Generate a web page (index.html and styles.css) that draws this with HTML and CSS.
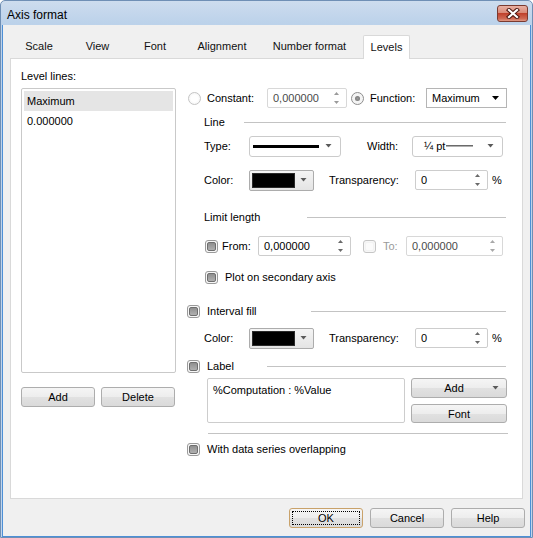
FILE: index.html
```html
<!DOCTYPE html>
<html>
<head>
<meta charset="utf-8">
<link rel="stylesheet" href="styles.css">
</head>
<body>
<div class="window">
  <div class="titlebar">
    <span class="title">Axis format</span>
    <div class="close">
      <svg width="14" height="11" viewBox="0 0 14 11"><path d="M3 2 L11 9 M11 2 L3 9" stroke="#4a1610" stroke-width="4.2" stroke-linecap="square"/><path d="M3 2 L11 9 M11 2 L3 9" stroke="#ffffff" stroke-width="2.2" stroke-linecap="square"/></svg>
    </div>
  </div>
  <div class="client">
    <div class="tabs">
      <div class="tab">Scale</div>
      <div class="tab">View</div>
      <div class="tab">Font</div>
      <div class="tab">Alignment</div>
      <div class="tab">Number format</div>
      <div class="tab active">Levels</div>
    </div>
    <div class="panel">
      <div class="left">
        <div class="lbl">Level lines:</div>
        <div class="listbox">
          <div class="item sel">Maximum</div>
          <div class="item">0.000000</div>
        </div>
        <div class="btnrow">
          <div class="btn w74">Add</div>
          <div class="btn w74">Delete</div>
        </div>
      </div>
      <div class="right">
        <div class="row r1">
          <span class="radio off"></span>
          <span class="t c-lbl">Constant:</span>
          <div class="spin dis w80"><span class="val">0,000000</span><svg class="arr" width="5" height="12" viewBox="0 0 5 12"><path d="M2.5 0 L5 3 H0Z" fill="#9a9a9a"/><path d="M0 9 H5 L2.5 12Z" fill="#9a9a9a"/></svg></div>
          <span class="radio on"></span>
          <span class="t f-lbl">Function:</span>
          <div class="combo w81"><span class="val">Maximum</span><svg width="7" height="4" viewBox="0 0 7 4"><path d="M0 0 H7 L3.5 4Z" fill="#000"/></svg></div>
        </div>

        <div class="row hdr mt7 ind17">
          <span class="t hw40">Line</span><span class="sep"></span>
        </div>

        <div class="row r20 mt7 ind17">
          <span class="t lw45">Type:</span>
          <div class="dd w92"><span class="linesample"></span><svg width="7" height="4" viewBox="0 0 7 4"><path d="M0.5 0 H6.5 L3.5 3.5Z" fill="#5a5a5a"/></svg></div>
          <span class="t lw45 ml26">Width:</span>
          <div class="dd w91 wd"><span class="val">¼ pt</span><span class="thin"></span><svg width="7" height="4" viewBox="0 0 7 4"><path d="M0.5 0 H6.5 L3.5 3.5Z" fill="#5a5a5a"/></svg></div>
        </div>

        <div class="row r20 mt14 ind17">
          <span class="t lw45">Color:</span>
          <div class="colorbox"><span class="swatch"></span><svg width="7" height="4" viewBox="0 0 7 4"><path d="M0.5 0 H6.5 L3.5 3.5Z" fill="#5a5a5a"/></svg></div>
          <span class="t tr-lbl">Transparency:</span>
          <div class="spin w73"><span class="val">0</span><svg class="arr" width="5" height="12" viewBox="0 0 5 12"><path d="M2.5 0 L5 3 H0Z" fill="#6a6a6a"/><path d="M0 9 H5 L2.5 12Z" fill="#6a6a6a"/></svg></div>
          <span class="t pct">%</span>
        </div>

        <div class="row hdr mt20 ind17">
          <span class="t hw103">Limit length</span><span class="sep"></span>
        </div>

        <div class="row r20 mt12 ind18">
          <span class="cb"></span>
          <span class="t from-lbl">From:</span>
          <div class="spin w93"><span class="val">0,000000</span><svg class="arr" width="5" height="12" viewBox="0 0 5 12"><path d="M2.5 0 L5 3 H0Z" fill="#6a6a6a"/><path d="M0 9 H5 L2.5 12Z" fill="#6a6a6a"/></svg></div>
          <span class="cb dis ml12"></span>
          <span class="t to-lbl">To:</span>
          <div class="spin dis w97"><span class="val">0,000000</span><svg class="arr" width="5" height="12" viewBox="0 0 5 12"><path d="M2.5 0 L5 3 H0Z" fill="#a8a8a8"/><path d="M0 9 H5 L2.5 12Z" fill="#a8a8a8"/></svg></div>
        </div>

        <div class="row hdr mt14 ind18">
          <span class="cb"></span><span class="t ml7">Plot on secondary axis</span>
        </div>

        <div class="row hdr mt20">
          <span class="cb"></span><span class="t ml7 hw104">Interval fill</span><span class="sep"></span>
        </div>

        <div class="row r20 mt10 ind17">
          <span class="t lw45">Color:</span>
          <div class="colorbox"><span class="swatch"></span><svg width="7" height="4" viewBox="0 0 7 4"><path d="M0.5 0 H6.5 L3.5 3.5Z" fill="#5a5a5a"/></svg></div>
          <span class="t tr-lbl">Transparency:</span>
          <div class="spin w73"><span class="val">0</span><svg class="arr" width="5" height="12" viewBox="0 0 5 12"><path d="M2.5 0 L5 3 H0Z" fill="#6a6a6a"/><path d="M0 9 H5 L2.5 12Z" fill="#6a6a6a"/></svg></div>
          <span class="t pct">%</span>
        </div>

        <div class="row hdr mt11">
          <span class="cb"></span><span class="t ml7 hw60">Label</span><span class="sep"></span>
        </div>

        <div class="labelrow">
          <div class="textarea">%Computation : %Value</div>
          <div class="labelbtns">
            <div class="btn addbtn"><span class="bt">Add</span><svg width="7" height="4" viewBox="0 0 7 4"><path d="M0.5 0 H6.5 L3.5 3.5Z" fill="#5a5a5a"/></svg></div>
            <div class="btn fontbtn">Font</div>
          </div>
        </div>

        <div class="sep2"></div>

        <div class="row hdr mt8">
          <span class="cb"></span><span class="t ml7">With data series overlapping</span>
        </div>
      </div>
    </div>
    <div class="footer">
      <div class="btn fbtn ok">OK</div>
      <div class="btn fbtn">Cancel</div>
      <div class="btn fbtn">Help</div>
    </div>
  </div>
</div>
</body>
</html>
```

FILE: styles.css
```css
html, body {
  margin: 0;
  padding: 0;
  background: #ffffff;
}
body {
  font-family: "Liberation Sans", Arial, sans-serif;
  font-size: 11px;
  color: #000;
}
.window {
  width: 533px;
  height: 538px;
  box-sizing: border-box;
  border: 1px solid #6f8fb5;
  border-radius: 5px 5px 0 0;
  background: linear-gradient(#cddcee 0px, #bcd2ea 22px, #c0d5ec 100%);
  display: flex;
  flex-direction: column;
}
.titlebar {
  height: 24px;
  flex: none;
  display: flex;
  justify-content: space-between;
  align-items: flex-start;
  padding: 0 4px 0 6px;
}
.title {
  font-size: 12px;
  line-height: 12px;
  margin-top: 8px;
  color: #000;
}
.close {
  margin-top: 4px;
  width: 31px;
  height: 17px;
  box-sizing: border-box;
  border: 1px solid #7a3a30;
  border-radius: 3px;
  background: linear-gradient(#e8b0a4 0%, #d98a78 45%, #c0412c 50%, #cf6a55 85%, #e09a86 100%);
  display: flex;
  align-items: center;
  justify-content: center;
}
.client {
  flex: 1;
  margin: 0 1px 0 1px;
  border: 1px solid #4d8fd6;
  border-top: none;
  background: #f0f0f0;
  padding: 10px 0 0 7px;
}
.tabs {
  display: grid;
  grid-template-columns: 58px 59px 56px 78px 97px 52px;
  height: 23px;
}
.tab {
  text-align: center;
  line-height: 23px;
  color: #111;
}
.tab.active {
  position: relative;
  z-index: 1;
  margin-left: 5px;
  height: 24px;
  box-sizing: border-box;
  background: #fff;
  border: 1px solid #d9d9d9;
  border-bottom: none;
  border-radius: 2px 2px 0 0;
  line-height: 23px;
  margin-bottom: -1px;
}
.panel {
  width: 513px;
  height: 441px;
  box-sizing: border-box;
  background: #fff;
  border: 1px solid #d9d9d9;
  display: grid;
  grid-template-columns: 155px 321px;
  column-gap: 11px;
  align-content: start;
  padding: 10px 0 0 10px;
}
.lbl {
  line-height: 14px;
  height: 14px;
}
.listbox {
  margin-top: 5px;
  height: 285px;
  box-sizing: border-box;
  border: 1px solid #c9c9c9;
  border-radius: 2px;
  padding: 2px 2px 0 2px;
}
.item {
  height: 20px;
  line-height: 20px;
  padding-left: 3px;
}
.item.sel {
  background: #e5e5e5;
}
.btnrow {
  margin-top: 14px;
  display: flex;
  gap: 6px;
}
.btn {
  height: 20px;
  box-sizing: border-box;
  border: 1px solid #adadad;
  border-radius: 3px;
  background: linear-gradient(#f5f5f5 0%, #ededed 50%, #e1e1e1 52%, #dadada 100%);
  display: flex;
  align-items: center;
  justify-content: center;
  color: #000;
}
.w74 { width: 74px; }

.right {
  padding-top: 19px;
  display: flex;
  flex-direction: column;
}
.row {
  display: flex;
  align-items: center;
}
.r1 { height: 20px; }
.r20 { height: 20px; }
.hdr { height: 14px; }
.mt7 { margin-top: 7px; }
.mt8 { margin-top: 8px; }
.mt10 { margin-top: 10px; }
.mt11 { margin-top: 11px; }
.mt12 { margin-top: 12px; }
.mt14 { margin-top: 14px; }
.mt20 { margin-top: 20px; }
.ind17 { margin-left: 17px; }
.ind18 { margin-left: 18px; }
.ml7 { margin-left: 7px; }
.ml12 { margin-left: 12px; }
.ml26 { margin-left: 26px; }
.t {
  white-space: nowrap;
  line-height: 14px;
}
.hw40 { width: 40px; flex: none; }
.hw60 { width: 60px; flex: none; }
.hw103 { width: 103px; flex: none; }
.hw104 { width: 104px; flex: none; }
.lw45 { width: 45px; flex: none; }
.sep {
  flex: 1;
  height: 1px;
  background: #c3c3c3;
  margin-right: 2px;
}

.radio {
  width: 13px;
  height: 13px;
  box-sizing: border-box;
  border-radius: 50%;
  flex: none;
  margin-left: 1px;
  display: flex;
  align-items: center;
  justify-content: center;
}
.radio.off {
  border: 1px solid #c4c4c4;
  background: radial-gradient(#ffffff 40%, #f0f0f0 100%);
}
.radio.on {
  border: 1px solid #8e8e8e;
  background: #f4f4f4;
  margin-left: 4px;
}
.radio.on::after {
  content: "";
  width: 5px;
  height: 5px;
  border-radius: 50%;
  background: radial-gradient(#9a9a9a, #6f6f6f);
}
.c-lbl { margin-left: 6px; width: 60px; }
.f-lbl { margin-left: 6px; width: 56px; }

.spin {
  height: 20px;
  box-sizing: border-box;
  border: 1px solid #cdcdcd;
  border-radius: 2px;
  background: #fff;
  display: flex;
  align-items: center;
  justify-content: space-between;
  padding: 0 7px 0 5px;
  flex: none;
}
.spin.dis .val { color: #4a4a4a; }
.spin.dis { border-color: #d8d8d8; }
.w73 { width: 73px; }
.w80 { width: 80px; }
.w81 { width: 81px; }
.w91 { width: 91px; }
.w92 { width: 92px; }
.w93 { width: 93px; }
.w97 { width: 97px; }

.combo {
  height: 20px;
  box-sizing: border-box;
  border: 1px solid #b5b5b5;
  background: #fff;
  display: flex;
  align-items: center;
  justify-content: space-between;
  padding: 0 7px 0 5px;
  flex: none;
}
.combo .val { margin-top: -1px; }

.dd {
  height: 21px;
  box-sizing: border-box;
  border: 1px solid #cbcbcb;
  border-radius: 3px;
  background: #fff;
  display: flex;
  align-items: center;
  padding: 0 8px 0 3px;
  flex: none;
}
.dd svg { margin-left: auto; }
.linesample {
  width: 66px;
  height: 3px;
  background: #000;
}
.wd { padding-left: 11px; }
.thin {
  width: 27px;
  height: 1px;
  background: #6a6a6a;
  margin-left: 1px;
  border-bottom: 1px solid #b0b0b0;
}

.colorbox {
  width: 65px;
  height: 21px;
  box-sizing: border-box;
  border: 1px solid #acacac;
  border-radius: 2px;
  background: linear-gradient(#f4f4f4, #e4e4e4);
  display: flex;
  align-items: center;
  padding: 0 6px 0 2px;
  flex: none;
}
.colorbox svg { margin-left: auto; }
.swatch {
  width: 43px;
  height: 15px;
  box-sizing: border-box;
  background: #000;
  border: 1px solid #2a2a2a;
}
.tr-lbl { margin-left: 15px; width: 86px; }
.pct { margin-left: 4px; }

.cb {
  width: 13px;
  height: 13px;
  box-sizing: border-box;
  border: 1px solid #9a9a9a;
  border-radius: 3px;
  background: #f7f7f7;
  padding: 1px;
  flex: none;
  display: flex;
}
.cb::after {
  content: "";
  flex: 1;
  border-radius: 2px;
  background: linear-gradient(#8f8f8f, #b0b0b0);
  border: 1px solid #6e6e6e;
}
.cb.dis {
  border-color: #c6c6c6;
}
.cb.dis::after {
  background: #fbfbfb;
  border-color: #f3f3f3;
}
.from-lbl { margin-left: 4px; width: 36px; }
.to-lbl { margin-left: 7px; width: 23px; color: #9a9a9a; }

.labelrow {
  margin-top: 5px;
  margin-left: 20px;
  display: flex;
  gap: 6px;
}
.textarea {
  width: 198px;
  height: 45px;
  box-sizing: border-box;
  border: 1px solid #cdcdcd;
  border-radius: 2px;
  padding: 4px 5px;
  line-height: 14px;
  background: #fff;
}
.labelbtns {
  display: flex;
  flex-direction: column;
  gap: 6px;
}
.addbtn {
  width: 96px;
  justify-content: flex-start;
  padding-right: 7px;
}
.addbtn .bt {
  flex: 1;
  text-align: center;
  margin-left: 4px;
}
.fontbtn {
  width: 96px;
  height: 19px;
}
.sep2 {
  margin-top: 10px;
  margin-left: 21px;
  height: 1px;
  background: #c3c3c3;
}

.footer {
  margin-top: 9px;
  display: flex;
  gap: 7px;
  padding-left: 279px;
}
.fbtn {
  width: 74px;
  height: 20px;
}
.ok {
  border-color: #c9a26a;
  outline: 1px dotted #000;
  outline-offset: -4px;
}
```
